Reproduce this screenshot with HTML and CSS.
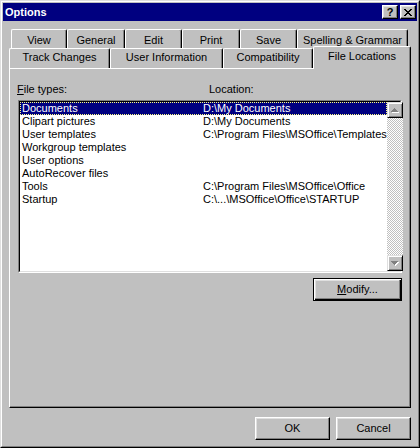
FILE: index.html
```html
<!DOCTYPE html>
<html>
<head>
<meta charset="utf-8">
<title>Options</title>
<link rel="stylesheet" href="styles.css">
</head>
<body>
<div class="window">
  <div class="window-inner">
    <div class="titlebar">
      <span class="title">Options</span>
      <div class="caption-btns">
        <button class="cap-btn help">?</button>
        <button class="cap-btn close">
          <svg width="8" height="7" viewBox="0 0 8 7"><path d="M0 0h2v1H0z M6 0h2v1H6z M1 1h2v1H1z M5 1h2v1H5z M2 2h4v1H2z M3 3h2v1H3z M2 4h4v1H2z M1 5h2v1H1z M5 5h2v1H5z M0 6h2v1H0z M6 6h2v1H6z" fill="#000"/></svg>
        </button>
      </div>
    </div>
    <div class="content">
      <div class="tabs">
        <div class="tab-row back">
          <div class="tab t-view">View</div>
          <div class="tab t-general">General</div>
          <div class="tab t-edit">Edit</div>
          <div class="tab t-print">Print</div>
          <div class="tab t-save">Save</div>
          <div class="tab t-spelling">Spelling &amp; Grammar</div>
        </div>
        <div class="tab-row front">
          <div class="tab t-track">Track Changes</div>
          <div class="tab t-user">User Information</div>
          <div class="tab t-compat">Compatibility</div>
          <div class="tab t-files selected">File Locations</div>
        </div>
      </div>
      <div class="panel">
        <div class="labels">
          <span><u>F</u>ile types:</span>
          <span>Location:</span>
        </div>
        <div class="listbox">
          <div class="listbox-inner">
            <div class="rows">
              <div class="row selected"><span>Documents</span><span>D:\My Documents</span></div>
              <div class="row"><span>Clipart pictures</span><span>D:\My Documents</span></div>
              <div class="row"><span>User templates</span><span>C:\Program Files\MSOffice\Templates</span></div>
              <div class="row"><span>Workgroup templates</span><span></span></div>
              <div class="row"><span>User options</span><span></span></div>
              <div class="row"><span>AutoRecover files</span><span></span></div>
              <div class="row"><span>Tools</span><span>C:\Program Files\MSOffice\Office</span></div>
              <div class="row"><span>Startup</span><span>C:\...\MSOffice\Office\STARTUP</span></div>
            </div>
            <div class="scrollbar">
              <div class="sb-btn">
                <svg width="8" height="5" viewBox="0 0 8 5"><path d="M4 1h1v1h1v1h1v1h1v1H1V4h1V3h1V2h1z" fill="#fff"/><path d="M3 0h1v1h1v1h1v1h1v1H0V3h1V2h1V1h1z" fill="#808080"/></svg>
              </div>
              <div class="sb-track"></div>
              <div class="sb-btn">
                <svg width="8" height="5" viewBox="0 0 8 5"><path d="M1 1h7v1h-1v1h-1v1h-1v1h-1v-1h-1v-1h-1v-1h-1z" fill="#fff"/><path d="M0 0h7v1h-1v1h-1v1h-1v1h-1v-1h-1v-1h-1v-1h-1z" fill="#808080"/></svg>
              </div>
            </div>
          </div>
        </div>
        <div class="modify-row">
          <button class="btn default modify"><u>M</u>odify...</button>
        </div>
      </div>
      <div class="footer">
        <button class="btn dialog-btn">OK</button>
        <button class="btn dialog-btn">Cancel</button>
      </div>
    </div>
  </div>
</div>
</body>
</html>
```

FILE: styles.css
```css
* {
  box-sizing: border-box;
}

html,
body {
  margin: 0;
  padding: 0;
  background: #c0c0c0;
}

body {
  font-family: "Liberation Sans", Arial, sans-serif;
  font-size: 11px;
  line-height: 13px;
  color: #000;
}

.window {
  width: 420px;
  height: 448px;
  border: 1px solid;
  border-color: #dfdfdf #000 #000 #dfdfdf;
  background: #c0c0c0;
  display: flex;
  flex-direction: column;
}

.window-inner {
  flex: 1;
  border: 1px solid;
  border-color: #fff #808080 #808080 #fff;
  padding: 1px;
  display: flex;
  flex-direction: column;
}

.titlebar {
  height: 18px;
  background: #000080;
  display: flex;
  align-items: center;
  justify-content: space-between;
  padding: 0 1px 0 2px;
}

.title {
  color: #fff;
  font-weight: bold;
  font-size: 11px;
  line-height: 13px;
}

.caption-btns {
  display: flex;
  gap: 2px;
}

.cap-btn {
  width: 16px;
  height: 14px;
  padding: 0;
  margin: 0;
  background: #c0c0c0;
  border: 1px solid;
  border-color: #fff #000 #000 #fff;
  box-shadow: inset -1px -1px #808080, inset 1px 1px #dfdfdf;
  display: flex;
  align-items: center;
  justify-content: center;
  font-family: "Liberation Sans", Arial, sans-serif;
  font-weight: bold;
  font-size: 11px;
  line-height: 11px;
  color: #000;
}

.cap-btn.help {
  padding-top: 1px;
}

.cap-btn.close svg {
  display: block;
  margin-left: -1px;
}

.content {
  flex: 1;
  padding: 8px 6px 0 6px;
  display: flex;
  flex-direction: column;
}

.tabs {
  display: flex;
  flex-direction: column;
}

.tab-row {
  display: flex;
  align-items: flex-start;
}

.tab-row.back {
  height: 19px;
  padding-left: 2px;
}

.tab-row.front {
  height: 20px;
}

.tab {
  background: #c0c0c0;
  border-top: 1px solid #fff;
  border-left: 1px solid #fff;
  border-right: 1px solid #000;
  border-top-left-radius: 2px;
  border-top-right-radius: 2px;
  box-shadow: inset -1px 0 #808080;
  text-align: center;
  white-space: nowrap;
}

.back .tab {
  height: 19px;
  padding-top: 4px;
}

.front .tab {
  height: 20px;
  padding-top: 2px;
}

.front .tab.selected {
  position: relative;
  z-index: 1;
  height: 23px;
  margin-top: -2px;
  padding-top: 3px;
}

.t-view { width: 56px; }
.t-general { width: 58px; }
.t-edit { width: 57px; }
.t-print { width: 58px; }
.t-save { width: 57px; }
.t-spelling { width: 111px; }

.t-track { width: 101px; }
.t-user { width: 113px; }
.t-compat { width: 90px; }
.t-files { width: 98px; }

.panel {
  height: 340px;
  border: 1px solid;
  border-color: #fff #000 #000 #fff;
  box-shadow: inset -1px -1px #808080;
  padding: 14px 8px 0 8px;
  display: flex;
  flex-direction: column;
}

.labels {
  display: grid;
  grid-template-columns: 192px 1fr;
  margin-left: -1px;
  height: 13px;
}

.listbox {
  margin-top: 4px;
  height: 173px;
  border: 1px solid;
  border-color: #808080 #fff #fff #808080;
}

.listbox-inner {
  height: 100%;
  border: 1px solid;
  border-color: #000 #dfdfdf #dfdfdf #000;
  background: #fff;
  display: flex;
}

.rows {
  flex: 1;
  display: flex;
  flex-direction: column;
}

.row {
  height: 13px;
  display: grid;
  grid-template-columns: 181px 1fr;
  padding-left: 2px;
  white-space: nowrap;
}

.row.selected {
  background: #000080;
  color: #fff;
  outline: 1px dotted #ffff7f;
  outline-offset: -1px;
}

.scrollbar {
  width: 16px;
  display: flex;
  flex-direction: column;
}

.sb-btn {
  width: 16px;
  height: 16px;
  background: #c0c0c0;
  border: 1px solid;
  border-color: #dfdfdf #000 #000 #dfdfdf;
  box-shadow: inset 1px 1px #fff, inset -1px -1px #808080;
  display: flex;
  align-items: center;
  justify-content: center;
}

.sb-btn svg {
  display: block;
}

.sb-track {
  flex: 1;
  background: repeating-conic-gradient(#c0c0c0 0 25%, #fff 0 50%) 0 0 / 2px 2px;
}

.modify-row {
  margin-top: 5px;
  display: flex;
  justify-content: flex-end;
}

.btn {
  font-family: "Liberation Sans", Arial, sans-serif;
  font-size: 11px;
  line-height: 13px;
  color: #000;
  background: #c0c0c0;
  padding: 0;
  margin: 0;
  height: 23px;
  border: 1px solid;
  border-color: #fff #000 #000 #fff;
  box-shadow: inset -1px -1px #808080, inset 1px 1px #dfdfdf;
  text-align: center;
}

.btn.default {
  border: 1px solid #000;
  box-shadow: inset 1px 1px #fff, inset -1px -1px #000, inset -2px -2px #808080, inset 2px 2px #dfdfdf;
}

.modify {
  width: 89px;
}

.footer {
  margin-top: 9px;
  display: flex;
  justify-content: flex-end;
  gap: 6px;
}

.dialog-btn {
  width: 75px;
}
```
